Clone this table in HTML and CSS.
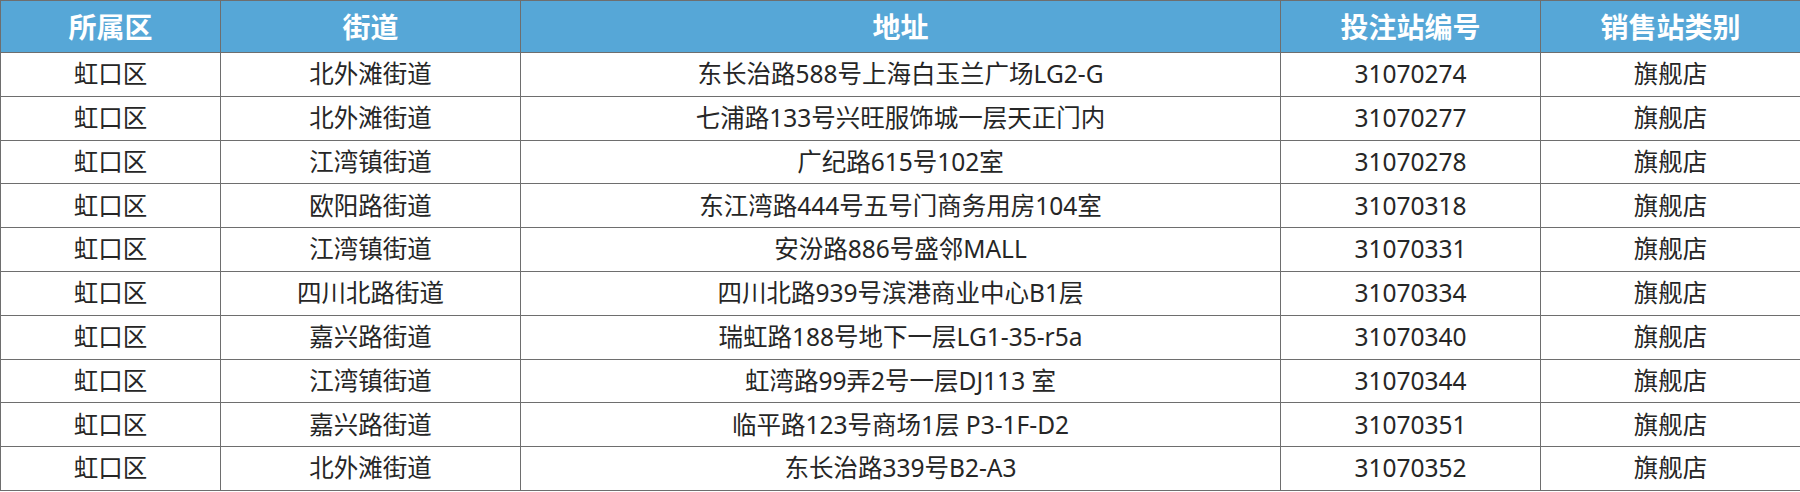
FILE: index.html
```html
<!DOCTYPE html>
<html lang="zh-CN">
<head>
<meta charset="utf-8">
<title>销售站列表</title>
<link rel="stylesheet" href="styles.css">
</head>
<body>
<table class="stations">
  <colgroup>
    <col class="c-district">
    <col class="c-street">
    <col class="c-address">
    <col class="c-code">
    <col class="c-type">
  </colgroup>
  <thead>
    <tr class="head">
      <th>所属区</th><th>街道</th><th>地址</th><th>投注站编号</th><th>销售站类别</th>
    </tr>
  </thead>
  <tbody>
    <tr><td>虹口区</td><td>北外滩街道</td><td>东长治路588号上海白玉兰广场LG2-G</td><td>31070274</td><td>旗舰店</td></tr>
    <tr><td>虹口区</td><td>北外滩街道</td><td>七浦路133号兴旺服饰城一层天正门内</td><td>31070277</td><td>旗舰店</td></tr>
    <tr><td>虹口区</td><td>江湾镇街道</td><td>广纪路615号102室</td><td>31070278</td><td>旗舰店</td></tr>
    <tr><td>虹口区</td><td>欧阳路街道</td><td>东江湾路444号五号门商务用房104室</td><td>31070318</td><td>旗舰店</td></tr>
    <tr><td>虹口区</td><td>江湾镇街道</td><td>安汾路886号盛邻MALL</td><td>31070331</td><td>旗舰店</td></tr>
    <tr><td>虹口区</td><td>四川北路街道</td><td>四川北路939号滨港商业中心B1层</td><td>31070334</td><td>旗舰店</td></tr>
    <tr><td>虹口区</td><td>嘉兴路街道</td><td>瑞虹路188号地下一层LG1-35-r5a</td><td>31070340</td><td>旗舰店</td></tr>
    <tr><td>虹口区</td><td>江湾镇街道</td><td>虹湾路99弄2号一层DJ113 室</td><td>31070344</td><td>旗舰店</td></tr>
    <tr><td>虹口区</td><td>嘉兴路街道</td><td>临平路123号商场1层 P3-1F-D2</td><td>31070351</td><td>旗舰店</td></tr>
    <tr><td>虹口区</td><td>北外滩街道</td><td>东长治路339号B2-A3</td><td>31070352</td><td>旗舰店</td></tr>
  </tbody>
</table>
</body>
</html>
```
FILE: styles.css
```css
html, body {
  margin: 0;
  padding: 0;
  background: #ffffff;
}

.stations {
  border-collapse: collapse;
  table-layout: fixed;
  width: 1800px;
  font-family: "Noto Sans", "Noto Sans CJK SC", sans-serif;
  color: #262626;
}

.c-district { width: 220px; }
.c-street { width: 300px; }
.c-address { width: 760px; }
.c-code { width: 260px; }
.c-type { width: 260px; }

.stations th,
.stations td {
  border: 1px solid #6e6e6e;
  padding: 0;
  text-align: center;
  vertical-align: middle;
  white-space: nowrap;
}

.stations .head {
  height: 52px;
}

.stations th {
  background: #56a7d7;
  color: #ffffff;
  font-size: 28px;
  font-weight: 700;
  line-height: 1;
}

.stations tbody tr {
  height: 43.8px;
}

.stations td {
  font-size: 24.5px;
  line-height: 1;
}
```
